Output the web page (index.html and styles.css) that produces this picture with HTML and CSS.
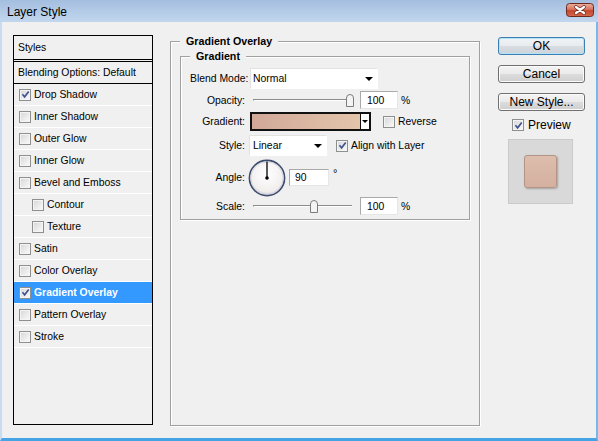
FILE: index.html
```html
<!DOCTYPE html>
<html lang="en">
<head>
<meta charset="UTF-8">
<title>Layer Style</title>
<link rel="stylesheet" href="styles.css">
</head>
<body>
<div class="window">
  <div class="titlebar">
    <span class="title">Layer Style</span>
    <div class="close">
      <svg width="28" height="14" viewBox="0 0 28 14">
        <defs>
          <linearGradient id="closeFill" x1="0" y1="0" x2="0" y2="1">
            <stop offset="0" stop-color="#eab0a2"/>
            <stop offset="0.45" stop-color="#d87460"/>
            <stop offset="0.55" stop-color="#c4472f"/>
            <stop offset="1" stop-color="#d66a50"/>
          </linearGradient>
        </defs>
        <rect x="0.5" y="0.5" width="27" height="13" rx="3" fill="url(#closeFill)" stroke="#6e2a1c"/>
        <path d="M10 4 L18 10 M18 4 L10 10" stroke="#6a2a1e" stroke-width="3.6" stroke-linecap="round"/>
        <path d="M10 4 L18 10 M18 4 L10 10" stroke="#fff" stroke-width="2.2" stroke-linecap="round"/>
      </svg>
    </div>
  </div>

  <div class="frame">
    <!-- styles list -->
    <div class="styles-list">
      <div class="list-head">Styles</div>
      <div class="list-row blending">Blending Options: Default</div>
      <div class="list-row"><span class="check on"><svg viewBox="0 0 10 10"><path d="M1.6 4.8 L4 7.6 L8.6 1.6"/></svg></span>Drop Shadow</div>
      <div class="list-row"><span class="check"></span>Inner Shadow</div>
      <div class="list-row"><span class="check"></span>Outer Glow</div>
      <div class="list-row"><span class="check"></span>Inner Glow</div>
      <div class="list-row"><span class="check"></span>Bevel and Emboss</div>
      <div class="list-row sub"><span class="check"></span>Contour</div>
      <div class="list-row sub"><span class="check"></span>Texture</div>
      <div class="list-row"><span class="check"></span>Satin</div>
      <div class="list-row"><span class="check"></span>Color Overlay</div>
      <div class="list-row selected"><span class="check on"><svg viewBox="0 0 10 10"><path d="M1.6 4.8 L4 7.6 L8.6 1.6"/></svg></span>Gradient Overlay</div>
      <div class="list-row"><span class="check"></span>Pattern Overlay</div>
      <div class="list-row"><span class="check"></span>Stroke</div>
    </div>

    <!-- gradient overlay settings -->
    <fieldset class="group outer">
      <legend>Gradient Overlay</legend>
      <fieldset class="group inner">
        <legend>Gradient</legend>

        <div class="field-row row-blend">
          <span class="field-label">Blend Mode:</span>
          <div class="select select-blend">Normal<span class="arrow"></span></div>
        </div>

        <div class="field-row row-opacity">
          <span class="field-label">Opacity:</span>
          <div class="slider">
            <div class="track"></div>
            <svg class="thumb" style="left: 97px" width="8" height="13" viewBox="0 0 8 13"><path d="M0.5 12.5 V4 Q0.5 0.5 4 0.5 Q7.5 0.5 7.5 4 V12.5 Z"/></svg>
          </div>
          <input class="num" type="text" value="100">
          <span class="unit">%</span>
        </div>

        <div class="field-row row-gradient">
          <span class="field-label">Gradient:</span>
          <div class="gradient-pick">
            <div class="gradient-fill"></div>
            <div class="gradient-arrow"><span class="arrow small"></span></div>
          </div>
          <span class="check reverse-check"></span>
          <span class="check-label">Reverse</span>
        </div>

        <div class="field-row row-style">
          <span class="field-label">Style:</span>
          <div class="select select-style">Linear<span class="arrow"></span></div>
          <span class="check on align-check"><svg viewBox="0 0 10 10"><path d="M1.6 4.8 L4 7.6 L8.6 1.6"/></svg></span>
          <span class="check-label">Align with Layer</span>
        </div>

        <div class="field-row row-angle">
          <span class="field-label">Angle:</span>
          <svg class="dial" width="38" height="38" viewBox="0 0 38 38">
            <defs>
              <radialGradient id="dialFill" cx="0.5" cy="0.4" r="0.6">
                <stop offset="0" stop-color="#ffffff"/>
                <stop offset="0.8" stop-color="#f2eeee"/>
                <stop offset="1" stop-color="#d8d4d8"/>
              </radialGradient>
            </defs>
            <circle cx="19" cy="19" r="17.6" fill="url(#dialFill)" stroke="#3e4c6c" stroke-width="1.6"/>
            <circle cx="19" cy="19" r="16.2" fill="none" stroke="#c8cede" stroke-width="0.8"/>
            <line x1="19" y1="19" x2="19" y2="2.5" stroke="#000" stroke-width="1.3"/>
            <circle cx="19" cy="19" r="1.8" fill="#000"/>
          </svg>
          <input class="num angle-num" type="text" value="90">
          <span class="degree">°</span>
        </div>

        <div class="field-row row-scale">
          <span class="field-label">Scale:</span>
          <div class="slider">
            <div class="track"></div>
            <svg class="thumb" style="left: 61px" width="8" height="13" viewBox="0 0 8 13"><path d="M0.5 12.5 V4 Q0.5 0.5 4 0.5 Q7.5 0.5 7.5 4 V12.5 Z"/></svg>
          </div>
          <input class="num" type="text" value="100">
          <span class="unit">%</span>
        </div>
      </fieldset>
    </fieldset>

    <!-- dialog buttons -->
    <div class="actions">
      <button class="btn default">OK</button>
      <button class="btn">Cancel</button>
      <button class="btn">New Style...</button>
      <div class="preview-row">
        <span class="check on"><svg viewBox="0 0 10 10"><path d="M1.6 4.8 L4 7.6 L8.6 1.6"/></svg></span>
        <span class="preview-label">Preview</span>
      </div>
      <div class="preview-box">
        <div class="preview-swatch"></div>
      </div>
    </div>
  </div>
</div>
</body>
</html>
```

FILE: styles.css
```css
body {
  margin: 0;
  background: #f0f0f0;
  font-family: "Liberation Sans", Arial, sans-serif;
  font-size: 10.4px;
  color: #000;
}
.window {
  width: 598px;
  height: 441px;
  display: flex;
  flex-direction: column;
  background: #f0f0f0;
}
.titlebar {
  height: 22px;
  flex: none;
  display: flex;
  align-items: center;
  justify-content: space-between;
  padding: 0 4px 0 7px;
  background: linear-gradient(#a4bedf, #c2d7ee);
}
.title {
  font-size: 12px;
  margin-top: 1px;
}
.close {
  width: 28px;
  height: 14px;
  margin-top: -3px;
}
.close svg {
  display: block;
}
.frame {
  flex: 1;
  display: flex;
  align-items: flex-start;
  padding: 13px 0 0 11px;
  border-left: 2px solid #c8dcf1;
  border-right: 2px solid #72b9ec;
  border-bottom: 3px solid #46a4e4;
}

/* styles list */
.styles-list {
  width: 140px;
  height: 390px;
  box-sizing: border-box;
  border: 1px solid #000;
  flex: none;
}
.list-head {
  height: 23px;
  line-height: 23px;
  padding-left: 4px;
  border-bottom: 3px double #000;
}
.list-row {
  height: 21px;
  display: flex;
  align-items: center;
  padding-left: 5px;
  border-bottom: 1px solid #fff;
  white-space: nowrap;
}
.list-row.blending {
  padding-left: 4px;
  border-bottom: 1px solid #000;
}
.list-row.sub {
  padding-left: 18px;
}
.list-row.selected {
  background: #3399ff;
  color: #fff;
  font-weight: bold;
}
.list-row .check {
  margin-right: 3px;
}

/* checkbox */
.check {
  width: 12px;
  height: 12px;
  box-sizing: border-box;
  flex: none;
  border: 1px solid #8e8f8f;
  background: linear-gradient(135deg, #d6d6d6, #fbfbfb);
  box-shadow: inset 0 0 0 1px #f4f4f4;
  display: flex;
  align-items: center;
  justify-content: center;
}
.check svg {
  width: 9px;
  height: 9px;
}
.check path {
  fill: none;
  stroke: #3d5290;
  stroke-width: 1.8;
}
.check-label {
  margin-left: 3px;
}

/* group boxes */
.group {
  margin: 0;
  box-sizing: border-box;
  border: 1px solid #a0a0a0;
  box-shadow: inset 1px 1px #fff, 1px 1px #fff;
  padding: 0 9px;
  min-width: 0;
}
.group legend {
  padding: 0 6px;
  font-weight: bold;
  font-size: 10.7px;
  line-height: 13px;
  background: #f0f0f0;
}
.group.outer {
  width: 310px;
  height: 391px;
  margin-left: 17px;
  flex: none;
}
.group.inner {
  margin-top: 2px;
  padding: 0 9px 4px;
}

.field-row {
  display: flex;
  align-items: center;
  white-space: nowrap;
}
.field-label {
  width: 55px;
  margin-right: 4px;
  text-align: right;
  flex: none;
}
.row-blend { height: 21px; margin-top: 5px; }
.row-opacity { height: 18px; margin-top: 2px; }
.row-gradient { height: 19px; margin-top: 3px; }
.row-style { height: 21px; margin-top: 4px; }
.row-angle { height: 37px; margin-top: 3px; }
.row-scale { height: 18px; margin-top: 1px; }

.select {
  height: 21px;
  box-sizing: border-box;
  display: flex;
  align-items: center;
  justify-content: space-between;
  padding: 0 4px 0 3px;
  background: #fff;
  border: 1px solid #fff;
  border-color: #e2e2e2 #fff #fff #e2e2e2;
}
.select-blend {
  width: 128px;
  margin-left: 1px;
  padding-left: 2px;
}
.select-style {
  width: 78px;
}
.arrow {
  width: 0;
  height: 0;
  border-left: 4px solid transparent;
  border-right: 4px solid transparent;
  border-top: 4px solid #000;
}
.arrow.small {
  border-left-width: 3px;
  border-right-width: 3px;
  border-top-width: 3px;
}

.slider {
  position: relative;
  width: 107px;
  height: 18px;
  display: flex;
  align-items: center;
  flex: none;
}
.track {
  flex: 1;
  margin: 0 4px;
  height: 0;
  border-top: 1px solid #8c8c8c;
  border-bottom: 1px solid #fff;
  border-left: 1px solid #8c8c8c;
}
.thumb {
  position: absolute;
  top: 3px;
}
.thumb path {
  fill: #f4f4f4;
  stroke: #7c7c7c;
}
.num {
  width: 38px;
  height: 18px;
  box-sizing: border-box;
  margin: 0 0 0 4px;
  padding: 0 0 0 6px;
  border: 1px solid;
  border-color: #a9a9a9 #e6e6e6 #e6e6e6 #a9a9a9;
  background: #fff;
  font-family: "Liberation Sans", Arial, sans-serif;
  font-size: 10.4px;
  color: #000;
  outline: none;
}
.unit {
  margin-left: 3px;
}

.gradient-pick {
  width: 121px;
  height: 19px;
  box-sizing: border-box;
  margin-left: 1px;
  border: 2px solid #111;
  display: flex;
  flex: none;
}
.gradient-fill {
  flex: 1;
  background: linear-gradient(90deg, #d2a898, #e3c5ab);
}
.gradient-arrow {
  width: 8px;
  background: #fff;
  border-left: 1px solid #111;
  display: flex;
  align-items: center;
  justify-content: center;
}
.reverse-check {
  margin-left: 12px;
}
.align-check {
  margin-left: 9px;
}

.dial {
  flex: none;
  margin-left: -1px;
}
.angle-num {
  width: 40px;
  height: 17px;
  margin-left: 3px;
  padding-left: 5px;
}
.degree {
  align-self: flex-start;
  margin: 8px 0 0 4px;
  font-size: 11px;
}

/* buttons */
.actions {
  width: 87px;
  margin: 2px 0 0 18px;
  flex: none;
  display: flex;
  flex-direction: column;
}
.btn {
  width: 87px;
  height: 18px;
  margin: 0 0 10px;
  padding: 0;
  border: 1px solid #707070;
  border-radius: 3px;
  background: linear-gradient(#f3f3f3 0%, #ebebeb 48%, #dcdcdc 52%, #cfcfcf 100%);
  font-family: "Liberation Sans", Arial, sans-serif;
  font-size: 12px;
  color: #000;
  box-shadow: inset 0 0 0 1px #fbfbfb;
}
.btn.default {
  border-color: #3c7fb1;
  box-shadow: inset 0 0 0 1px #b4e2f8;
  background: linear-gradient(#f2f4f6 0%, #e8ecef 48%, #d8dde2 52%, #ccd3d9 100%);
}
.preview-row {
  display: flex;
  align-items: center;
  height: 12px;
  margin: -2px 0 0 14px;
}
.preview-label {
  margin-left: 4px;
  font-size: 12px;
}
.preview-box {
  width: 65px;
  height: 65px;
  box-sizing: border-box;
  margin: 8px 0 0 10px;
  background: #d9d9d9;
  border: 1px solid #cacaca;
  display: flex;
  align-items: center;
  justify-content: center;
}
.preview-swatch {
  width: 33px;
  height: 33px;
  box-sizing: border-box;
  border: 1px solid #b49484;
  border-radius: 3px;
  background: linear-gradient(#ddbdad, #d4b09f);
  box-shadow: 1px 1px 2px rgba(0, 0, 0, 0.25);
}
```
